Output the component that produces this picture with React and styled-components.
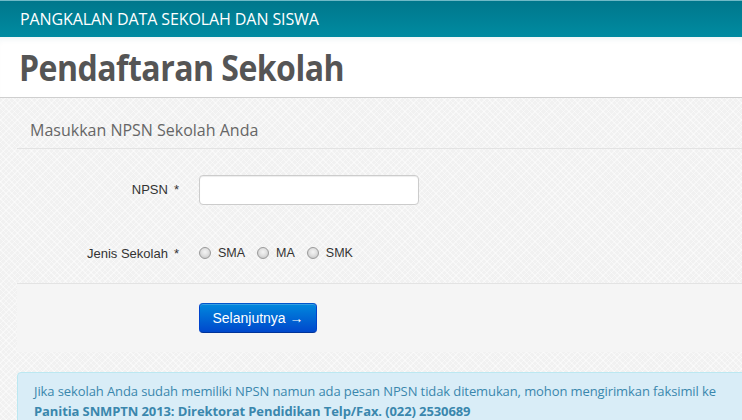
import React from "react";
import styled, { createGlobalStyle } from "styled-components";

const Global = createGlobalStyle`
  html, body { margin: 0; padding: 0; }
  body {
    font-family: "Liberation Sans", Arial, sans-serif;
    background-color: #f1f1f1;
    background-image:
      repeating-linear-gradient(45deg, rgba(255,255,255,0.45) 0 1px, transparent 1px 4px),
      repeating-linear-gradient(-45deg, rgba(255,255,255,0.45) 0 1px, transparent 1px 4px);
    width: 742px;
    height: 420px;
    overflow: hidden;
  }
`;

const TopBar = styled.div`
  height: 36px;
  border-top: 1px solid #6fb9c7;
  background: linear-gradient(#00778c, #008ba1);
  display: flex;
  align-items: center;
  padding-left: 20px;
  color: #fff;
  font-family: "Open Sans", sans-serif;
  font-size: 16px;
  letter-spacing: -0.1px;
`;

const Header = styled.div`
  height: 60px;
  background: #fff;
  border-bottom: 1px solid #cfcfcf;
  box-shadow: inset 0 6px 6px -4px rgba(0, 100, 120, 0.08);
  display: flex;
  align-items: center;
  padding-left: 19px;
`;

const Title = styled.h1`
  margin: 0;
  font-family: "Open Sans", sans-serif;
  font-weight: 700;
  font-size: 36px;
  letter-spacing: -0.6px;
  color: #555;
  transform: scaleX(0.89);
  transform-origin: left center;
  white-space: nowrap;
  padding-top: 1px;
`;

const Main = styled.div`
  padding-left: 17px;
`;

const Legend = styled.div`
  height: 51px;
  box-sizing: border-box;
  border-bottom: 1px solid #e3e3e3;
  padding: 21px 0 0 13px;
  font-family: "Open Sans", sans-serif;
  font-size: 16px;
  color: #666;
`;

const Row = styled.div`
  display: grid;
  grid-template-columns: 162px 1fr;
  column-gap: 20px;
  align-items: center;
  height: ${(p) => p.$h}px;
  padding-top: ${(p) => p.$pt || 0}px;
  padding-bottom: ${(p) => p.$pb || 0}px;
  box-sizing: border-box;
`;

const Label = styled.label`
  text-align: right;
  font-size: 13px;
  color: #333;
  font-family: "Liberation Sans", Arial, sans-serif;
  span { margin-left: 6px; }
`;

const Input = styled.input`
  width: 220px;
  height: 30px;
  box-sizing: border-box;
  border: 1px solid #ccc;
  border-radius: 4px;
  background: #fff;
  box-shadow: inset 0 1px 1px rgba(0,0,0,0.075);
  margin: 0;
`;

const Radios = styled.div`
  display: flex;
  align-items: center;
  gap: 12px;
`;

const RadioItem = styled.label`
  display: flex;
  align-items: center;
  gap: 7px;
  font-size: 12.5px;
  color: #333;
`;

const RadioDot = styled.span`
  width: 12px;
  height: 12px;
  border-radius: 50%;
  border: 1px solid #9a9a9a;
  background: radial-gradient(circle at 50% 40%, #f4f4f4 0, #e0e0e0 45%, #bdbdbd 100%);
  box-sizing: border-box;
`;

const Actions = styled.div`
  border-top: 1px solid #e3e3e3;
  background: #f5f5f5;
  height: 69px;
  box-sizing: border-box;
  padding: 19px 0 0 182px;
`;

const Button = styled.button`
  width: 118px;
  height: 30px;
  border-radius: 4px;
  border: 1px solid;
  border-color: #0055cc #0044cc #003399;
  background: linear-gradient(#0088dd, #0048cc);
  color: #fff;
  font-family: "Liberation Sans", Arial, sans-serif;
  font-size: 14px;
  padding: 0;
  box-shadow: inset 0 1px 0 rgba(255,255,255,0.2);
`;

const Alert = styled.div`
  margin-top: 20px;
  margin-right: -10px;
  background: #d9edf7;
  border: 1px solid #bce8f1;
  border-radius: 4px;
  padding: 8px 16px 6px 16px;
  color: #3a87ad;
  font-family: "Open Sans", sans-serif;
  font-size: 13px;
  line-height: 20px;
  letter-spacing: -0.1px;
  white-space: nowrap;
  b { font-weight: 700; }
`;

export default function App() {
  return (
    <>
      <Global />
      <TopBar>PANGKALAN DATA SEKOLAH DAN SISWA</TopBar>
      <Header>
        <Title>Pendaftaran Sekolah</Title>
      </Header>
      <Main>
        <Legend>Masukkan NPSN Sekolah Anda</Legend>
        <Row $h={80} $pt={1}>
          <Label>NPSN<span>*</span></Label>
          <Input type="text" />
        </Row>
        <Row $h={54} $pb={6}>
          <Label>Jenis Sekolah<span>*</span></Label>
          <Radios>
            <RadioItem><RadioDot />SMA</RadioItem>
            <RadioItem><RadioDot />MA</RadioItem>
            <RadioItem><RadioDot />SMK</RadioItem>
          </Radios>
        </Row>
        <Actions>
          <Button>Selanjutnya →</Button>
        </Actions>
        <Alert>
          Jika sekolah Anda sudah memiliki NPSN namun ada pesan NPSN tidak ditemukan, mohon mengirimkan faksimil ke
          <br />
          <b>Panitia SNMPTN 2013: Direktorat Pendidikan Telp/Fax. (022) 2530689</b>
        </Alert>
      </Main>
    </>
  );
}
